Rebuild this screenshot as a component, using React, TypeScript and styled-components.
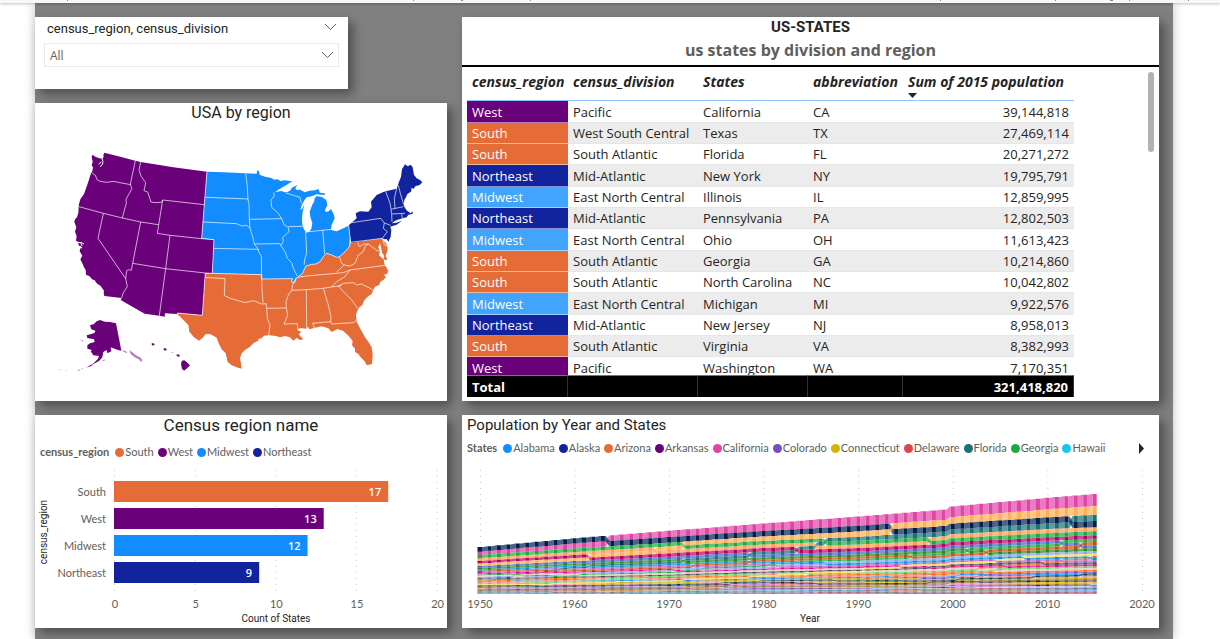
import React from "react";
import styled, { createGlobalStyle } from "styled-components";

const ui = '"Open Sans", "Noto Sans", sans-serif';
const small = 'Lato, "Open Sans", sans-serif';
const din = 'Roboto, "Liberation Sans", sans-serif';

const Global = createGlobalStyle`
  * { box-sizing: border-box; }
  body { margin: 0; background: #fff; font-family: ${ui}; color: #252423; }
`;

const Page = styled.div`
  min-height: 100vh;
  display: flex;
  flex-direction: column;
  overflow: hidden;
`;

const Toolbar = styled.header`
  height: 3px;
  background: #f8f8f8;
  box-shadow: 0 1px 3px rgba(0, 0, 0, 0.25);
  z-index: 1;
`;

const ToolbarMarks = styled.svg`
  display: block;
  width: 100%;
  height: 3px;
`;

const Report = styled.main`
  flex: 1;
  margin: 0 47px 0 35px;
  padding: 14px 14px 11px 0;
  display: grid;
  grid-template-columns: 412fr 697fr;
  column-gap: 15px;
  align-items: start;
  background: #808080;
  box-shadow: 0 0 10px rgba(0, 0, 0, 0.25);
`;

const Column = styled.div`
  display: flex;
  flex-direction: column;
  gap: 14px;
  min-width: 0;
`;

const Card = styled.section`
  background: #fff;
  min-width: 0;
  box-shadow: 5px 5px 10px rgba(0, 0, 0, 0.4);
`;

const SlicerCard = styled(Card)`
  width: 76%;
  padding: 2px 9px 22px;
`;

const SlicerHead = styled.div`
  display: flex;
  justify-content: space-between;
  align-items: flex-start;
  height: 24px;
  padding: 0 2px 0 3px;
  font: 400 13px/20px ${din};
`;

const IconButton = styled.button`
  display: flex;
  padding: 0;
  border: 0;
  background: none;
  color: #605e5c;
`;

const CollapseButton = styled(IconButton)`
  margin-top: 4px;
`;

const SelectBox = styled.div`
  display: grid;
  align-items: center;
  height: 24px;
  border: 1px solid #eaeaea;
  & > * { grid-area: 1 / 1; }
  & > svg { justify-self: end; margin-right: 4px; pointer-events: none; color: #605e5c; }
`;

const Select = styled.select`
  appearance: none;
  width: 100%;
  height: 22px;
  padding: 2px 5px 0;
  border: 0;
  background: none;
  color: #605e5c;
  font: 400 12px/20px ${ui};
`;

const Title = styled.h2<{ $left?: boolean; $size?: number; $bold?: boolean }>`
  margin: 0;
  padding: 0 5px;
  text-align: ${(p) => (p.$left ? "left" : "center")};
  font: ${(p) => (p.$bold ? 700 : 400)} ${(p) => p.$size ?? 16}px/20px ${din};
`;

const Subtitle = styled.p`
  margin: 0;
  padding-bottom: 2px;
  border-bottom: 2px solid #000;
  text-align: center;
  color: #605e5c;
  font: 700 16px/26px ${ui};
`;

const Drawing = styled.svg`
  display: block;
  width: 100%;
  height: auto;
`;

const Legend = styled.div<{ $top: number }>`
  display: flex;
  align-items: center;
  gap: 4px;
  height: 18px;
  margin-top: ${(p) => p.$top}px;
  padding: 0 5px;
  color: #605e5c;
  font: 400 11px/18px ${small};
  white-space: nowrap;
`;

const LegendName = styled.span`
  margin-right: 2px;
  font-weight: 700;
`;

const LegendItem = styled.span<{ $color: string }>`
  display: flex;
  align-items: center;
  gap: 1px;
  &::before {
    content: "";
    width: 9px;
    height: 9px;
    border-radius: 50%;
    background: ${(p) => p.$color};
  }
`;

const LegendNext = styled(IconButton)`
  margin: 0 7px 0 auto;
  color: #252423;
`;

const TableArea = styled.div`
  display: flex;
  justify-content: space-between;
  align-items: flex-start;
  height: 334px;
  padding: 0 5px;
`;

const TableScroll = styled.div`
  height: 330px;
  overflow: hidden;
`;

const ScrollThumb = styled.div`
  width: 6px;
  height: 80px;
  margin-top: 5px;
  border-radius: 3px;
  background: #b3b0ad;
`;

const Table = styled.table`
  width: 607px;
  table-layout: fixed;
  border-collapse: separate;
  border-spacing: 0;
  font-size: 13px;
  line-height: 20px;
  white-space: nowrap;

  th, td { padding: 0 5px; text-align: left; }
  td:last-child { text-align: right; }
  thead th {
    height: 34px;
    padding-top: 5px;
    vertical-align: top;
    border-bottom: 1px solid #8cc5ff;
    font-size: 14px;
    font-style: italic;
    font-weight: 700;
    position: relative;
  }
  tbody td { height: 21px; border-bottom: 1px solid #e6e6e6; }
  tbody tr:nth-child(3n + 1) td { height: 22px; }
  tbody tr:nth-child(even) td { background: #ececec; }
  tfoot td {
    position: sticky;
    bottom: 0;
    height: 22px;
    background: #000;
    color: #fff;
    font-weight: 700;
    border-top: 1px solid #118dff;
    border-right: 1px solid #333;
  }
`;

const RegionCell = styled.td<{ $color: string }>`
  && { background: ${(p) => p.$color} !important; border-bottom-color: rgba(255, 255, 255, 0.5); }
  color: #fff;
`;

const SortArrow = styled.svg`
  position: absolute;
  left: 5px;
  bottom: 2px;
`;

const Chevron = () => (
  <svg width="13" height="8" viewBox="0 0 13 8" fill="none" stroke="currentColor" aria-hidden="true">
    <path d="M1 1l5.500 5.500L12 1" />
  </svg>
);

const COLORS: Record<string, string> = {
  South: "#e66c37",
  West: "#6b007b",
  Midwest: "#118dff",
  Northeast: "#12239e",
};

/* ---------- map ---------- */

const WEST =
  "M97 44L106 50 118 55 128 56 131 50 130 44 133 38 175 49 226 62 242 66 340 82 441 95 433 194 425 296 462 299 457 400 436 399 427 526 352 519 350 522 315 520 314 530 298 527 254 521 182 480 185 474 133 468 131 460 132 452 122 438 110 430 104 421 96 418 89 409 78 404 77 390 72 382 67 370 61 358 67 347 59 334 61 325 68 325 62 318 56 317 55 306 48 302 50 288 45 275 49 262 43 246 45 238 51 232 55 218 56 200 57 192 61 178 72 162 84 128 93 100 97 94 99 82 95 76 98 65 95 52Z";
const MIDWEST =
  "M51 65L100 67 167 70 200 71 202 61 207 64 209 74 225 80 245 84 252 89 262 88 272 93 283 91 307 94 288 106 270 116 255 126 275 123 284 127 290 127 300 122 306 113 322 105 316 115 320 120 330 119 345 127 358 122 375 121 385 117 390 128 404 130 405 134 392 134 380 133 365 139 350 142 342 152 334 168 331 180 336 177 343 163 338 185 336 205 337 225 343 240 350 248 358 245 364 236 367 220 361 200 359 185 364 172 368 162 372 155 374 145 380 138 395 141 409 150 412 165 405 180 407 186 416 184 423 177 431 193 434 205 430 214 425 224 423 240 440 244 455 237 476 227 480 260 478 290 465 305 452 318 448 320 440 322 425 315 410 310 400 320 390 335 378 342 365 343 348 348 342 360 338 370 325 380 320 384 317 391 314 398 304 396 308 386 215 387 215 374 67 370 71 268 35 265 43 160Z";
const SOUTH =
  "M46 371L67 370 215 374 215 387 308 386 304 396 314 398 318 386 325 380 338 370 342 360 348 348 365 343 378 342 390 335 400 320 410 310 425 315 440 322 448 320 452 318 465 305 478 290 481 277 577 265 581 272 591 284 593 300 587 318 592 328 587 331 580 326 583 318 576 308 573 290 570 280 565 292 570 305 567 316 574 322 582 330 582 338 586 347 595 362 591 372 581 374 588 381 580 390 571 395 567 406 556 409 550 420 545 432 532 441 522 452 517 465 508 472 503 480 498 495 500 515 510 535 525 562 536 577 545 592 548 612 546 642 530 646 524 634 514 624 505 612 495 606 495 596 486 586 488 573 476 558 460 543 442 537 425 546 415 535 395 529 372 534 358 538 354 530 348 536 330 534 322 540 334 546 326 553 340 568 330 570 320 564 310 572 300 562 285 558 270 562 258 558 238 556 222 557 212 567 208 564 204 572 190 580 180 590 165 600 155 610 150 625 153 640 155 656 140 652 125 646 113 636 107 610 95 598 87 582 80 563 62 553 47 552 38 563 27 572 12 562 -2 545 -5 525 -20 510 -40 490 37 496Z";
const NORTHEAST =
  "M476 226L485 218 500 205 497 190 510 184 535 185 545 172 543 155 560 135 580 126 587 124 620 116 626 98 633 80 636 58 645 43 653 49 662 44 668 52 672 75 680 85 690 90 697 97 688 106 677 108 670 117 665 113 663 125 652 132 648 142 643 150 641 165 645 174 651 182 662 190 668 184 668 192 655 194 650 202 640 204 628 208 615 212 606 220 620 218 636 212 620 224 601 230 604 240 602 260 595 275 590 267 583 268 577 265 483 279Z";

const WEST_BORDERS =
  "M95 98L106 106 112 120 120 124 140 127 160 124 180 128 212 134M226 62L211 133 216 146 208 160 198 178 199 190 196 200 187 234M57 200L130 220 187 234 242 246 295 254M242 66L237 90 243 108 257 128 252 152 263 156 273 186 285 188 304 187 308 180 433 194M308 180L292 280 330 286 425 296M130 220L114 295 197 416M242 246L218 370 214 391 206 389 200 392 197 416 202 440 190 458 185 474M218 370L317 386 436 399M330 286L317 386 298 527M441 95L433 194 425 296 462 299 457 400 436 399 427 526 352 519";
const EAST_BORDERS =
  "M47 142L175 147M167 70L172 110 174 150 177 160 178 208 180 235 188 260 193 282 205 298 207 308 214 318 215 387M38 216L140 221 155 228 170 226 180 235M178 208L275 206M71 295L205 298M193 282L270 281 275 286M252 127L252 140 243 150 245 172 265 190 275 206 283 225 295 232 297 245 278 262 280 275 272 286 285 305 292 325 305 338 310 355 322 378M288 129L330 142 334 160M295 230L337 229M347 245L350 310 345 325 342 345M398 240L404 312M358 245L425 238M67 370L215 374M215 387L308 386M46 382L105 386 103 436 120 445 145 452 165 458 190 452 215 462 228 461M215 374L216 415 219 458M228 461L230 475 289 474M230 475L232 505 240 525 236 556M318 383L308 405 305 421 295 435 288 455 289 474 293 495 282 522 322 521 323 540M305 421L350 419 400 415 425 411 455 407M322 382L350 378 460 368 480 360 586 346M480 360L465 380 440 395 425 411M349 419L350 533M400 415L415 465 423 500 422 517M367 520L422 515 425 522 490 518 498 512M369 520L373 534M445 408L465 430 485 450 503 475M445 408L460 400 490 398 500 405 515 402 550 420M440 366L463 345 455 340 448 320M463 345L480 348 495 340 505 315 520 305 525 290 535 282M503 278L508 290 520 283 535 282 545 290 558 300 568 304M577 265L583 285 592 288M308 386L304 396 314 398 318 386 338 370 342 360 348 348 365 343 378 342 390 335 400 320 410 310 425 315 440 322 448 320 465 305 478 290 481 277 577 265M476 226L482 279M485 218L572 205 583 219 580 235 592 245 577 265M583 219L602 226M587 124L600 160 603 178 605 192 606 215M620 116L613 145 615 175M603 178L640 170M605 192L645 190M635 192L637 205M625 106L631 130 641 163";
const ALASKA =
  "M120 76L132 72 140 64 150 60 165 65 180 66 198 70 206 110 214 152 204 150 190 145 182 142 184 154 172 160 170 150 160 156 157 172 148 182 135 190 125 195 134 187 144 176 147 168 130 166 122 154 126 150 112 146 112 136 120 130 134 126 132 118 112 114 110 106 124 102 134 98 136 92 124 88Z";
const ISLES =
  "M104 203L112 201 122 195 130 192 124 198 112 202ZM304 131L311 129 314 134 308 137ZM340 146L346 144 351 150 344 152ZM378 165L386 163 390 169 384 170ZM396 182L403 181 412 188 420 196 412 204 402 212 396 206 393 192Z";
const FAINT_ISLES =
  "M92 207L100 205 98 208ZM80 211L92 208 88 212ZM90 118L100 122 98 125ZM80 144L84 146ZM216 150L228 154 232 160 222 156ZM238 150L246 156 258 166 270 172 277 180 274 186 266 178 254 172 242 162ZM156 182L166 178 162 184ZM364 156L372 158 366 159ZM26 208L36 210 32 211ZM46 211L53 212 50 213Z";

const UsMap = () => (
  <Drawing viewBox="0 0 412 278" role="img" aria-label="USA by region">
    <g transform="translate(25 17) scale(0.33333)">
      <path fill={COLORS.West} d={WEST} />
      <path fill="none" stroke="#fff" strokeWidth="3" d="M126 56L129 64 127 74 120 80M124 66L116 72M54 307L64 308 72 312M62 307L66 318" />
    </g>
    <g transform="translate(155 27) scale(0.33333)">
      <path fill={COLORS.Midwest} d={MIDWEST} />
      <path fill={COLORS.South} d={SOUTH} />
      <path fill={COLORS.Northeast} d={NORTHEAST} />
      <path fill="none" stroke="#fff" strokeOpacity="0.8" strokeWidth="2.500" strokeLinejoin="round" d={EAST_BORDERS} />
    </g>
    <g transform="translate(25 17) scale(0.33333)">
      <path fill="none" stroke="#fff" strokeOpacity="0.8" strokeWidth="2.500" strokeLinejoin="round" d={WEST_BORDERS} />
    </g>
    <g transform="translate(15 177) scale(0.33333)" fill={COLORS.West}>
      <path d={ALASKA} />
      <path d={ISLES} />
      <path d={FAINT_ISLES} fillOpacity="0.5" />
    </g>
  </Drawing>
);

/* ---------- bar chart ---------- */

const COUNTS: [string, number][] = [["South", 17], ["West", 13], ["Midwest", 12], ["Northeast", 9]];

const AxisText = styled.text<{ $anchor?: string; $dark?: boolean }>`
  font-family: ${(p) => (p.$dark ? din : small)};
  font-size: ${(p) => (p.$dark ? 10 : 11)}px;
  fill: ${(p) => (p.$dark ? "#252423" : "#605e5c")};
  text-anchor: ${(p) => p.$anchor ?? "middle"};
`;

const BarValue = styled(AxisText)`
  fill: #fff;
  font-family: ${ui};
  font-weight: 600;
`;

const Grid = styled.line`
  stroke: #c8c6c4;
  stroke-dasharray: 1 5;
`;

const BAR_X = 79;
const BAR_UNIT = 16.13;

const BarChart = () => (
  <Drawing viewBox="0 0 412 167" role="img" aria-label="Count of states by census region">
    {[0, 5, 10, 15, 20].map((v) => (
      <g key={v}>
        <Grid x1={BAR_X + v * BAR_UNIT + 0.5} x2={BAR_X + v * BAR_UNIT + 0.5} y1="9" y2="134" />
        <AxisText x={BAR_X + v * BAR_UNIT + 1} y="147">{v}</AxisText>
      </g>
    ))}
    {COUNTS.map(([name, count], i) => (
      <g key={name}>
        <AxisText $anchor="end" x="71" y={35 + i * 27}>{name}</AxisText>
        <rect x={BAR_X} y={20 + i * 27} width={count * BAR_UNIT} height="21" fill={COLORS[name]} />
        <BarValue $anchor="end" x={BAR_X + count * BAR_UNIT - 7} y={35 + i * 27}>{count}</BarValue>
      </g>
    ))}
    <AxisText $dark x="241" y="161">Count of States</AxisText>
    <AxisText $dark transform="rotate(-90 12 71)" x="12" y="71">census_region</AxisText>
  </Drawing>
);

/* ---------- ribbon chart ---------- */

const YEARS = [1950, 1960, 1970, 1980, 1990, 2000, 2010, 2015];

/* colour, then population in millions at each of YEARS */
const STATES: [string, number[]][] = [
  ["#118dff", [3.06, 3.27, 3.44, 3.89, 4.04, 4.45, 4.78, 4.86]],
  ["#12239e", [0.14, 0.23, 0.3, 0.4, 0.55, 0.63, 0.71, 0.74]],
  ["#e66c37", [0.75, 1.3, 1.77, 2.72, 3.66, 5.13, 6.39, 6.83]],
  ["#6b007b", [1.91, 1.79, 1.92, 2.29, 2.35, 2.67, 2.92, 2.98]],
  ["#e044a7", [10.59, 15.72, 19.95, 23.67, 29.76, 33.87, 37.25, 39.14]],
  ["#744ec2", [1.33, 1.75, 2.21, 2.89, 3.29, 4.3, 5.03, 5.46]],
  ["#d9b300", [2.01, 2.54, 3.03, 3.11, 3.29, 3.41, 3.57, 3.59]],
  ["#d64550", [0.32, 0.45, 0.55, 0.59, 0.67, 0.78, 0.9, 0.95]],
  ["#197278", [2.77, 4.95, 6.79, 9.75, 12.94, 15.98, 18.8, 20.27]],
  ["#1aab40", [3.44, 3.94, 4.59, 5.46, 6.48, 8.19, 9.69, 10.21]],
  ["#15c6f4", [0.5, 0.63, 0.77, 0.96, 1.11, 1.21, 1.36, 1.43]],
  ["#4092ff", [0.59, 0.67, 0.71, 0.94, 1.01, 1.29, 1.57, 1.65]],
  ["#ffa058", [8.71, 10.08, 11.11, 11.43, 11.43, 12.42, 12.83, 12.86]],
  ["#be5dc9", [3.93, 4.66, 5.19, 5.49, 5.54, 6.08, 6.48, 6.62]],
  ["#f472d0", [2.62, 2.76, 2.82, 2.91, 2.78, 2.93, 3.05, 3.12]],
  ["#b5a1ff", [1.91, 2.18, 2.25, 2.36, 2.48, 2.69, 2.85, 2.91]],
  ["#c4a200", [2.94, 3.04, 3.22, 3.66, 3.69, 4.04, 4.34, 4.43]],
  ["#ff8080", [2.68, 3.26, 3.64, 4.21, 4.22, 4.47, 4.53, 4.67]],
  ["#00dbbc", [0.91, 0.97, 0.99, 1.12, 1.23, 1.27, 1.33, 1.33]],
  ["#5bd667", [2.34, 3.1, 3.92, 4.22, 4.78, 5.3, 5.77, 6.01]],
  ["#0091d5", [4.69, 5.15, 5.69, 5.74, 6.02, 6.35, 6.55, 6.79]],
  ["#4668c5", [6.37, 7.82, 8.88, 9.26, 9.3, 9.94, 9.88, 9.92]],
  ["#ff6300", [2.98, 3.41, 3.8, 4.08, 4.38, 4.92, 5.3, 5.49]],
  ["#99700a", [2.18, 2.18, 2.22, 2.52, 2.57, 2.84, 2.97, 2.99]],
  ["#ec008c", [3.95, 4.32, 4.68, 4.92, 5.12, 5.6, 5.99, 6.08]],
  ["#533285", [0.59, 0.67, 0.69, 0.79, 0.8, 0.9, 0.99, 1.03]],
  ["#99700a", [1.33, 1.41, 1.48, 1.57, 1.58, 1.71, 1.83, 1.9]],
  ["#ff4141", [0.16, 0.29, 0.49, 0.8, 1.2, 2.0, 2.7, 2.89]],
  ["#1f9a85", [0.53, 0.61, 0.74, 0.92, 1.11, 1.24, 1.32, 1.33]],
  ["#25891c", [4.84, 6.07, 7.17, 7.36, 7.73, 8.41, 8.79, 8.96]],
  ["#0057a2", [0.68, 0.95, 1.02, 1.3, 1.52, 1.82, 2.06, 2.09]],
  ["#002050", [14.83, 16.6, 18.24, 17.56, 17.99, 18.98, 19.5, 19.8]],
  ["#c94f0f", [4.06, 4.56, 5.08, 5.88, 6.63, 8.05, 9.54, 10.04]],
  ["#450f54", [0.62, 0.63, 0.62, 0.65, 0.64, 0.64, 0.67, 0.76]],
  ["#b60064", [7.95, 9.71, 10.65, 10.8, 10.85, 11.35, 11.54, 11.61]],
  ["#34124f", [2.23, 2.33, 2.56, 3.03, 3.15, 3.45, 3.75, 3.91]],
  ["#6a5a29", [1.52, 1.77, 2.09, 2.63, 2.84, 3.42, 3.83, 4.03]],
  ["#1aab40", [10.5, 11.32, 11.79, 11.86, 11.88, 12.28, 12.7, 12.8]],
  ["#ba141a", [0.79, 0.86, 0.95, 0.95, 1.0, 1.05, 1.05, 1.06]],
  ["#0d3d37", [2.12, 2.38, 2.59, 3.12, 3.49, 4.01, 4.63, 4.9]],
  ["#0b511f", [0.65, 0.68, 0.67, 0.69, 0.7, 0.75, 0.81, 0.86]],
  ["#4a4a55", [3.29, 3.57, 3.93, 4.59, 4.88, 5.69, 6.35, 6.6]],
  ["#ffb055", [7.71, 9.58, 11.2, 14.23, 16.99, 20.85, 25.15, 27.47]],
  ["#8ad4eb", [0.69, 0.89, 1.06, 1.46, 1.72, 2.23, 2.76, 3.0]],
  ["#7f898a", [0.38, 0.39, 0.44, 0.51, 0.56, 0.61, 0.63, 0.63]],
  ["#86a3f0", [3.32, 3.97, 4.65, 5.35, 6.19, 7.08, 8.0, 8.38]],
  ["#fbdc50", [2.38, 2.85, 3.41, 4.13, 4.87, 5.89, 6.72, 7.17]],
  ["#a66999", [2.01, 1.86, 1.74, 1.95, 1.79, 1.81, 1.85, 1.84]],
  ["#e6c8be", [3.43, 3.95, 4.42, 4.71, 4.89, 5.36, 5.69, 5.77]],
  ["#3599b8", [0.29, 0.33, 0.33, 0.47, 0.45, 0.49, 0.56, 0.59]],
];

const populationAt = (series: number[], year: number) => {
  let i = 0;
  while (i < YEARS.length - 2 && year >= YEARS[i + 1]) i++;
  const t = (year - YEARS[i]) / (YEARS[i + 1] - YEARS[i]);
  const value = series[i] + (series[i + 1] - series[i]) * t;
  /* estimates made during the 1990s ran below the 2000 census */
  return year > 1990 && year < 2000 ? value * (1 - 0.003 * (year - 1990)) : value;
};

const RIBBON_X = 18;
const YEAR_STEP = 9.457;
const BASE_Y = 137;
const MILLION = 0.312;

const buildRibbons = () => {
  const bars = STATES.map(() => "");
  const bands = STATES.map(() => "");
  let previous: { top: number; bottom: number }[] = [];
  for (let year = 1950; year <= 2015; year++) {
    const x = RIBBON_X + (year - 1950) * YEAR_STEP;
    const left = year === 1950 ? x - 2.5 : x - 2;
    const right = x + 2;
    const values = STATES.map(([, s], i) => ({ i, v: populationAt(s, year) })).sort((a, b) => a.v - b.v);
    const spans: { top: number; bottom: number }[] = [];
    let y = BASE_Y;
    values.forEach(({ i, v }) => {
      const top = y - v * MILLION;
      spans[i] = { top, bottom: y };
      bars[i] += `M${left} ${top}H${right}V${y}H${left}Z`;
      if (previous.length) {
        const x0 = x - YEAR_STEP + 2;
        const mid = (x0 + left) / 2;
        const p = previous[i];
        bands[i] += `M${x0} ${p.top}C${mid} ${p.top} ${mid} ${top} ${left} ${top}V${y}C${mid} ${y} ${mid} ${p.bottom} ${x0} ${p.bottom}Z`;
      }
      y = top;
    });
    previous = spans;
  }
  return STATES.map(([color], i) => ({ color, bar: bars[i], band: bands[i] }));
};

const RIBBONS = buildRibbons();

const RibbonChart = () => (
  <Drawing viewBox="0 0 697 171" role="img" aria-label="Population by year and state">
    {[0, 1, 2, 3, 4, 5, 6, 7].map((d) => (
      <g key={d}>
        <Grid x1={RIBBON_X + d * 94.57 + 0.5} x2={RIBBON_X + d * 94.57 + 0.5} y1="13" y2="137" />
        <AxisText x={RIBBON_X + d * 94.57} y="151">{1950 + d * 10}</AxisText>
      </g>
    ))}
    {RIBBONS.map((r, i) => (
      <g key={i} fill={r.color}>
        <path d={r.band} fillOpacity="0.7" />
        <path d={r.bar} />
      </g>
    ))}
    <AxisText $dark x="348" y="165">Year</AxisText>
  </Drawing>
);

const STATE_LEGEND: [string, string][] = [
  ["Alabama", "#118dff"], ["Alaska", "#12239e"], ["Arizona", "#e66c37"], ["Arkansas", "#6b007b"],
  ["California", "#e044a7"], ["Colorado", "#744ec2"], ["Connecticut", "#d9b300"], ["Delaware", "#d64550"],
  ["Florida", "#197278"], ["Georgia", "#1aab40"], ["Hawaii", "#15c6f4"],
];

/* ---------- table ---------- */

const ROWS = [
  ["West", "Pacific", "California", "CA", "39,144,818"],
  ["South", "West South Central", "Texas", "TX", "27,469,114"],
  ["South", "South Atlantic", "Florida", "FL", "20,271,272"],
  ["Northeast", "Mid-Atlantic", "New York", "NY", "19,795,791"],
  ["Midwest", "East North Central", "Illinois", "IL", "12,859,995"],
  ["Northeast", "Mid-Atlantic", "Pennsylvania", "PA", "12,802,503"],
  ["Midwest", "East North Central", "Ohio", "OH", "11,613,423"],
  ["South", "South Atlantic", "Georgia", "GA", "10,214,860"],
  ["South", "South Atlantic", "North Carolina", "NC", "10,042,802"],
  ["Midwest", "East North Central", "Michigan", "MI", "9,922,576"],
  ["Northeast", "Mid-Atlantic", "New Jersey", "NJ", "8,958,013"],
  ["South", "South Atlantic", "Virginia", "VA", "8,382,993"],
  ["West", "Pacific", "Washington", "WA", "7,170,351"],
];

const RegionCol = styled.col`width: 101px;`;
const DivisionCol = styled.col`width: 130px;`;
const StateCol = styled.col`width: 110px;`;
const AbbreviationCol = styled.col`width: 95px;`;
const PopulationCol = styled.col`width: 171px;`;

export default function App() {
  return (
    <Page>
      <Global />
      <Toolbar>
        <ToolbarMarks aria-hidden="true">
          <path stroke="#888" d="M67.500 0v1M413.500 0v1M461 0.500h2M530.500 0v1M940.500 0v1M1055.500 0v1M1110 0.500h3M1129.500 0v1M1188.500 0v1" />
        </ToolbarMarks>
      </Toolbar>
      <Report>
        <Column>
          <SlicerCard>
            <SlicerHead>
              <label htmlFor="region">census_region, census_division</label>
              <CollapseButton aria-label="Collapse slicer"><Chevron /></CollapseButton>
            </SlicerHead>
            <SelectBox>
              <Select id="region"><option>All</option></Select>
              <Chevron />
            </SelectBox>
          </SlicerCard>
          <Card>
            <Title>USA by region</Title>
            <UsMap />
          </Card>
          <Card>
            <Title $size={17}>Census region name</Title>
            <Legend $top={8}>
              <LegendName>census_region</LegendName>
              {COUNTS.map(([name]) => <LegendItem key={name} $color={COLORS[name]}>{name}</LegendItem>)}
            </Legend>
            <BarChart />
          </Card>
        </Column>
        <Column>
          <Card>
            <Title $bold $size={15}>US-STATES</Title>
            <Subtitle>us states by division and region</Subtitle>
            <TableArea>
              <TableScroll>
                <Table>
                  <colgroup>
                    <RegionCol /><DivisionCol /><StateCol /><AbbreviationCol /><PopulationCol />
                  </colgroup>
                  <thead>
                    <tr>
                      <th>census_region</th><th>census_division</th><th>States</th><th>abbreviation</th>
                      <th>
                        Sum of 2015 population
                        <SortArrow width="9" height="5" viewBox="0 0 9 5" aria-hidden="true"><path d="M0 0h9L4.500 5z" fill="#252423" /></SortArrow>
                      </th>
                    </tr>
                  </thead>
                  <tbody>
                    {ROWS.map(([region, division, state, abbr, pop]) => (
                      <tr key={state}>
                        <RegionCell $color={region === "Midwest" ? "#41a4ff" : COLORS[region]}>{region}</RegionCell>
                        <td>{division}</td><td>{state}</td><td>{abbr}</td><td>{pop}</td>
                      </tr>
                    ))}
                  </tbody>
                  <tfoot>
                    <tr><td>Total</td><td /><td /><td /><td>321,418,820</td></tr>
                  </tfoot>
                </Table>
              </TableScroll>
              <ScrollThumb />
            </TableArea>
          </Card>
          <Card>
            <Title $left $size={15}>Population by Year and States</Title>
            <Legend $top={4}>
              <LegendName>States</LegendName>
              {STATE_LEGEND.map(([name, color]) => <LegendItem key={name} $color={color}>{name}</LegendItem>)}
              <LegendNext aria-label="Next legend page">
                <svg width="11" height="11" viewBox="0 0 11 11"><path d="M3 0l5 5.500L3 11z" fill="currentColor" /></svg>
              </LegendNext>
            </Legend>
            <RibbonChart />
          </Card>
        </Column>
      </Report>
    </Page>
  );
}
